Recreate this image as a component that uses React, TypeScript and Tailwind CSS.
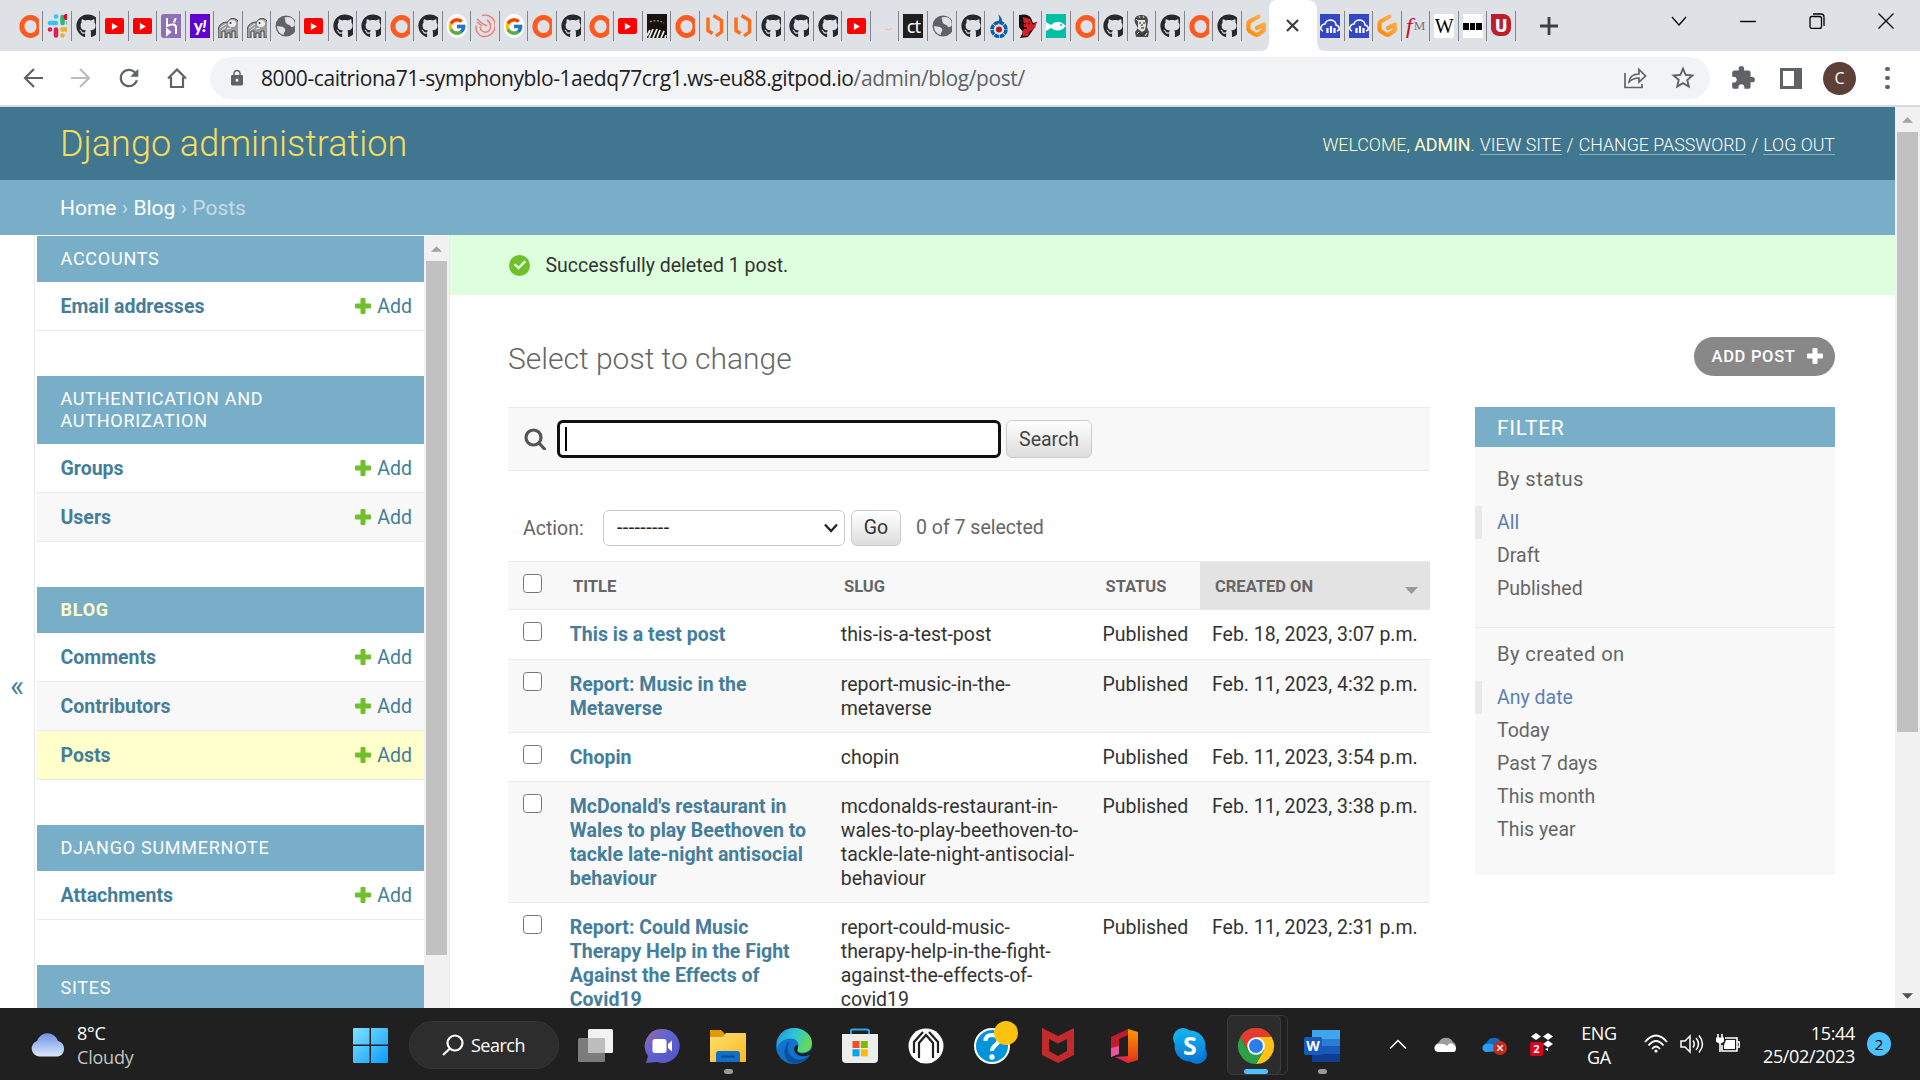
import React from "react";
import { FaGithub, FaCheck } from "react-icons/fa";
import { FcGoogle } from "react-icons/fc";
import { MdExtension, MdLock, MdStarBorder, MdRefresh } from "react-icons/md";

/* ---------- tab favicons ---------- */

const OrangeRing = () => (
  <svg viewBox="0 0 24 24" className="size-6">
    <ellipse cx="11.500" cy="12.500" rx="8.600" ry="9" fill="none" stroke="#ff5a1f" strokeWidth="5" />
  </svg>
);

const Slack = () => (
  <svg viewBox="0 0 24 24" className="size-6">
    <g strokeWidth="4.600" strokeLinecap="round">
      <path d="M9 2.500v0M9 9H3" stroke="#36c5f0" />
      <path d="M15.500 3v6M21.500 9v0" stroke="#2eb67d" />
      <path d="M15.500 15.500h6M15.500 21.500v0" stroke="#ecb22e" />
      <path d="M9 15.500v6M3 15.500v0" stroke="#e01e5a" />
    </g>
    <circle cx="19.500" cy="3" r="3" fill="#e8001c" />
  </svg>
);

const Github = () => <FaGithub className="size-6 text-[#24292f]" />;

const Youtube = () => (
  <div className="mt-1 ml-[0.5px] flex h-4 w-[19px] items-center justify-center rounded-[2px] bg-[#ff0000]">
    <svg viewBox="0 0 8 8" className="size-[7px]">
      <path d="M1 0l7 4-7 4z" fill="#fff" />
    </svg>
  </div>
);

const Heroku = () => (
  <div className="h-6 w-5 rounded-l-[3px] bg-[#8f70b5]">
    <svg viewBox="0 0 20 24" className="h-6 w-5">
      <path d="M6 4v8c4-2 9-2.500 9 1.500V20M14.500 4c0 2-1 3.500-2 4.500M6 15.500v5l3-2.500z" fill="none" stroke="#fff" strokeWidth="2" />
    </svg>
  </div>
);

const Yahoo = () => (
  <div className="flex h-6 w-5 items-center justify-center bg-[#6001d2] font-['Lato'] text-[17px] font-black tracking-tighter text-white">
    y<span className="italic">!</span>
  </div>
);

const Elephant = () => (
  <svg viewBox="0 0 24 24" className="size-6">
    <path d="M0 24V16c1-6 5-8 10-8 1-4 7-5 10-1 2 4 1 10 0 17h-3v-7h-3v7h-2v-5H9v5H7v-7H4v7z" fill="#9b9b9b" stroke="#444" strokeWidth="1" />
    <ellipse cx="14" cy="9.500" rx="4" ry="3.500" fill="#eee" />
    <path d="M10 8l4 3M2 14l6-4M3 17l5-4M9 15l4-1" stroke="#eee" />
    <circle cx="12.500" cy="9" r="1" fill="#333" />
  </svg>
);

const Globe = () => (
  <svg viewBox="0 0 24 24" className="size-6">
    <circle cx="11" cy="12" r="10.500" fill="#5f6368" />
    <path d="M2 12c3 1 7 0 8 3s-2 3-1 6c-4-1-7-4-7-9zM9 4c3-2 7-1 9 1 2 3 2 5 1.500 7-2 1-3 2-4 0s-4-1-5-4 1-2-1.500-4z" fill="#dee1e6" />
  </svg>
);

const Google = () => (
  <div className="flex h-6 w-5 items-center justify-center rounded-full bg-white">
    <FcGoogle className="h-[21px] w-5" />
  </div>
);

const Swirl = () => (
  <svg viewBox="0 0 24 24" className="size-6" fill="none" stroke="#ee7b75" strokeWidth="1.400">
    <path d="M7 1.500c9-2 14 5 13 11.500-1 7-7 10-12 9.500-5-1-8-6-6.500-11M12 6c4 2 5 9 1 11.500-4 2-8-1-8-5M2 5l6 5 4 2M2 8l5 4" />
  </svg>
);

const Piano = () => (
  <svg viewBox="0 0 20 24" className="h-6 w-5">
    <rect width="20" height="24" fill="#15120f" />
    <path d="M3 8q7-3 14 1" stroke="#a67a2c" strokeWidth="1.500" fill="none" strokeDasharray="2 1.500" />
    <path d="M0 22l3-6M2 24l4-9M6 24l4-9M10 24l3-8M14 24l3-7M18 24l1-3" stroke="#eee" strokeWidth="1.800" />
  </svg>
);

const Hexes = () => (
  <svg viewBox="0 0 22 24" className="h-6 w-[22px]" fill="none" stroke="#ff6c1a" strokeWidth="3.400">
    <path d="M4 3.500V16.500l4.500 3M9.500 1.500L17.500 6.500V18l-5.500 4" />
  </svg>
);

const PaleBird = () => (
  <svg viewBox="0 0 24 24" className="size-6">
    <path d="M1 12q5 0 7 3t5 1l7-5q0 7-8 7T1 12z" fill="#e9dfe4" />
    <path d="M10 15l4 1 3-2" stroke="#f0b5b5" fill="none" />
  </svg>
);

const Ct = () => (
  <div className="flex h-6 w-5 items-center justify-center bg-[#1f1f1f] font-['Noto_Sans'] text-[18px] leading-6 tracking-tighter text-white">ct</div>
);

const Commons = () => (
  <svg viewBox="0 0 20 24" className="h-6 w-5">
    <circle cx="10" cy="15.500" r="7" fill="none" stroke="#0a5fa5" strokeWidth="3.500" strokeDasharray="4.700 .8" />
    <circle cx="10" cy="15.500" r="3" fill="#b01c1c" />
    <path d="M9 0q6 5 3 9H8q4-4 1-9z" fill="#0a5fa5" />
  </svg>
);

const Devil = () => (
  <svg viewBox="0 0 20 24" className="h-6 w-5">
    <path d="M1 1q9-2 12 3l2 5 4-1-4 8-5 7-8 1 3-6-4-5z" fill="#1a1010" />
    <path d="M5 3l7 2 3 6 4-4-2 7-6 4-1 4-5 0-1-4 2-3z" fill="#d42027" />
    <path d="M5 9l3 1M10 9l2 1M5 14h4" stroke="#200" strokeWidth="1.300" />
  </svg>
);

const Fish = () => (
  <svg viewBox="0 0 20 24" className="h-6 w-5">
    <rect width="20" height="24" fill="#00bfa5" />
    <path d="M0 8l5 3q7-7 15 1-7 8-15 2l-5 3z" fill="#fff" />
    <circle cx="15" cy="11" r="1" fill="#00bfa5" />
  </svg>
);

const Portrait = () => (
  <svg viewBox="0 0 20 24" className="h-6 w-5">
    <path d="M3 9Q1 2 8 1q8-1 8 6l-1 6 2 5-1 5H4l-1-5 3-4z" fill="#4a4a4a" />
    <path d="M6 6h7l1 5-1 5-3 2-4-3z" fill="#e2e2e2" />
    <path d="M7 9h2M11 9h2M9 14h3M10 10v2M7 19l3 3 4-4" stroke="#222" fill="none" />
    <path d="M4 5l2 2M7 2l1 2M11 2l1 2M5 20l2-2M13 22l2-3" stroke="#ddd" />
  </svg>
);

const Gitpod = () => (
  <svg viewBox="0 0 24 24" className="size-6">
    <defs>
      <linearGradient id="gp" x1="1" x2="0" y1="0" y2="1">
        <stop stopColor="#ffb45b" />
        <stop offset="1" stopColor="#ff8a00" />
      </linearGradient>
    </defs>
    <path d="M12.500 2.500L3.500 7.500q-1 .6-1 2v5.500q0 1.500 1 2l5.500 3.500q1.500.8 3 0l5-3.500q1-.6 1-2v-4.500L11 14" fill="none" stroke="url(#gp)" strokeWidth="4.200" strokeLinecap="round" strokeLinejoin="round" />
  </svg>
);

const Cloudinary = () => (
  <svg viewBox="0 0 20 24" className="h-6 w-5">
    <rect width="20" height="24" fill="#3448c5" />
    <path d="M3 17q-3-1-2-4 1-3 4-3 1-4 6-4 5 1 5 5 4 1 3 5l-2 1" fill="none" stroke="#fff" strokeWidth="1.500" />
    <path d="M7.500 19v-5M11 19v-7M14.500 19v-5" stroke="#fff" strokeWidth="2.200" />
  </svg>
);

const Fm = () => (
  <div className="flex h-6 w-5 items-center font-['Liberation_Serif'] leading-6">
    <span className="w-[8px] text-[24px] text-[#c8102e] italic">f</span>
    <span className="text-[13px] text-[#777]">M</span>
  </div>
);

const Wiki = () => (
  <div className="flex h-6 w-5 items-center justify-center rounded-[2px] bg-white font-['Liberation_Serif'] text-[20px] text-black">W</div>
);

const Blocks = () => (
  <div className="flex h-6 w-5 items-center justify-center gap-px bg-white">
    <i className="h-[7px] w-[5.5px] bg-black" />
    <i className="h-[7px] w-[5.5px] bg-black" />
    <i className="h-[7px] w-[5.5px] bg-black" />
  </div>
);

const RedU = () => (
  <div className="flex h-[22px] w-5 items-center justify-center rounded-[8px] rounded-tl-none bg-[#bd1e2d] font-['Roboto'] text-[18px] font-black text-white">U</div>
);

const leftTabs: React.FC[] = [
  OrangeRing, Slack, Github, Youtube, Youtube, Heroku, Yahoo, Elephant, Elephant, Globe, Youtube,
  Github, Github, OrangeRing, Github, Google, Swirl, Google, OrangeRing, Github, OrangeRing, Youtube,
  Piano, OrangeRing, Hexes, Hexes, Github, Github, Github, Youtube, PaleBird, Ct, Globe, Github,
  Commons, Devil, Fish, OrangeRing, Github, Portrait, Github, OrangeRing, Github, Gitpod,
];
const rightTabs: React.FC[] = [Cloudinary, Cloudinary, Gitpod, Fm, Wiki, Blocks, RedU];

function Tab({ Icon, line }: { Icon: React.FC; line: boolean }) {
  return (
    <div className="flex w-[28.55px] shrink-0 items-center justify-between pl-[4px]">
      <div className="h-6 w-5 overflow-hidden">
        <Icon />
      </div>
      {line && <div className="h-[30px] w-px bg-[#80858b]" />}
    </div>
  );
}

function TabStrip() {
  return (
    <div className="flex h-[51px] bg-[#dee1e6]">
      <div className="flex w-[1269px] items-center rounded-br-[10px] bg-[#dee1e6] pt-px pl-[14.500px]">
        {leftTabs.map((I, i) => (
          <Tab key={i} Icon={I} line={i < leftTabs.length - 1} />
        ))}
      </div>
      <div className="-ml-2 flex w-[64px] bg-white [clip-path:path('M0_51Q8_51_8_41V10Q8_0_16_0H46Q56_0_56_10V41Q56_51_64_51Z')]">
        <svg viewBox="0 0 14 14" className="mt-[19px] ml-[25px] size-[13px]" stroke="#3c4043" strokeWidth="2.400">
          <path d="M1 1l12 12M13 1L1 13" />
        </svg>
      </div>
      <div className="-ml-[9px] flex items-center pt-px">
        {rightTabs.map((I, i) => (
          <Tab key={i} Icon={I} line />
        ))}
      </div>
      <svg viewBox="0 0 18 18" className="mt-[17px] ml-[24px] size-[18px]" stroke="#3c4043" strokeWidth="2.800">
        <path d="M9 0v18M0 9h18" />
      </svg>
      <div className="mt-[13px] mr-[26px] ml-auto flex h-4 items-center gap-[53px] text-black">
        <svg viewBox="0 0 16 16" className="size-4" fill="none" stroke="currentColor" strokeWidth="1.200">
          <path d="M1 4l7 8 7-8" />
        </svg>
        <svg viewBox="0 0 16 16" className="size-4" stroke="currentColor" strokeWidth="1.400">
          <path d="M0 8.500h16" />
        </svg>
        <svg viewBox="0 0 16 16" className="size-4" fill="none" stroke="currentColor" strokeWidth="1.300">
          <rect x="1" y="3.500" width="11.500" height="12" rx="2" />
          <path d="M4 1h8q3 0 3 3v9" />
        </svg>
        <svg viewBox="0 0 16 16" className="size-4" stroke="currentColor" strokeWidth="1.300">
          <path d="M.5.5l15 15M15.500.5l-15 15" />
        </svg>
      </div>
    </div>
  );
}

function Toolbar() {
  return (
    <div className="flex h-[56px] items-center border-b-2 border-[#d9dadc] bg-white font-['Open_Sans'] text-[#5f6368]">
      <div className="flex w-[210px] items-center gap-[28px] pl-[23px]">
        <svg viewBox="0 0 20 20" className="size-5" fill="none" stroke="currentColor" strokeWidth="2.200">
          <path d="M20 10H2M11 1l-9 9 9 9" />
        </svg>
        <svg viewBox="0 0 20 20" className="size-5" fill="none" stroke="#b9bbbe" strokeWidth="2.200">
          <path d="M0 10h18M9 1l9 9-9 9" />
        </svg>
        <MdRefresh className="-mx-[4px] size-7" />
        <svg viewBox="0 0 20 20" className="size-5" fill="none" stroke="currentColor" strokeWidth="2.200">
          <path d="M1 10.500L10 1.500l9 9M4 9v10h12V9" />
        </svg>
      </div>
      <div className="flex h-[42px] w-[1500px] items-center rounded-full bg-[#f1f3f4] pl-[18px]">
        <MdLock className="size-[18px]" />
        <div className="ml-[15px] w-[770px] pt-[2px] text-[21px] tracking-[-0.41px] whitespace-nowrap text-[#202124]">
          8000-caitriona71-symphonyblo-1aedq77crg1.ws-eu88.gitpod.io
          <span className="text-[#5f6368]">/admin/blog/post/</span>
        </div>
        <svg viewBox="0 0 24 22" className="mr-[22px] ml-auto h-[22px] w-6" fill="none" stroke="currentColor" strokeWidth="1.700">
          <path d="M2 6v14.500h17V17" />
          <path d="M6 15q1-8 10-8V2.500l6.500 6.500-6.500 6v-4q-6 0-10 4z" />
        </svg>
        <MdStarBorder className="mr-[13px] size-[28px]" />
      </div>
      <div className="flex grow items-center pl-[20px]">
        <MdExtension className="size-[26px]" />
        <div className="ml-[24px] h-[21px] w-[22px] border-[3px] border-r-[8px] border-[#5f6368]" />
        <div className="ml-[21px] flex size-[33px] items-center justify-center rounded-full bg-[#5d4037] text-[16px] text-white">C</div>
        <div className="ml-[29px] flex flex-col gap-[4.500px]">
          <i className="size-[4.5px] rounded-full bg-[#5f6368]" />
          <i className="size-[4.5px] rounded-full bg-[#5f6368]" />
          <i className="size-[4.5px] rounded-full bg-[#5f6368]" />
        </div>
      </div>
    </div>
  );
}

/* ---------- Django admin ---------- */

const Plus = () => (
  <svg viewBox="0 0 16 16" className="size-4 shrink-0" fill="currentColor">
    <path d="M6.500 0h3q1 0 1 1v4.500H15q1 0 1 1v3q0 1-1 1h-4.500V15q0 1-1 1h-3q-1 0-1-1v-4.500H1q-1 0-1-1v-3q0-1 1-1h4.500V1q0-1 1-1z" />
  </svg>
);

type NavModule = { name: string; items: string[]; tall?: boolean; current?: boolean };

const modules: NavModule[] = [
  { name: "ACCOUNTS", items: ["Email addresses"] },
  { name: "AUTHENTICATION AND AUTHORIZATION", items: ["Groups", "Users"], tall: true },
  { name: "BLOG", items: ["Comments", "Contributors", "Posts"], current: true },
  { name: "DJANGO SUMMERNOTE", items: ["Attachments"] },
  { name: "SITES", items: [] },
];

function Module({ m }: { m: NavModule }) {
  return (
    <div className="mb-[45px]">
      <div
        className={`bg-[#79aec8] py-3 pl-[23.5px] text-[18px] leading-[22px] tracking-[0.75px] ${m.tall ? "h-[68px] pr-24" : "h-[46px]"} ${
          m.current ? "font-bold text-[#ffffcc]" : "text-white"
        }`}
      >
        {m.name}
      </div>
      {m.items.map((item, i) => (
        <div
          key={item}
          className={`flex h-[49px] items-center border-b border-[#eaeaea] pr-3 pl-[23.5px] text-[19.500px] text-[#447e9b] ${
            item === "Posts" ? "bg-[#ffffcc]" : i % 2 ? "bg-[#f8f8f8]" : "bg-white"
          }`}
        >
          <span className="pt-[2px] font-bold">{item}</span>
          <div className="mr-[6px] ml-auto text-[#70bf2b]">
            <Plus />
          </div>
          <span className="pt-[2px]">Add</span>
        </div>
      ))}
    </div>
  );
}

function ScrollArrow({ up, dark }: { up?: boolean; dark?: boolean }) {
  return (
    <svg viewBox="0 0 12 6" className={`h-[6px] w-[11px] ${dark ? "text-[#505050]" : "text-[#a3a3a3]"}`}>
      <path d={up ? "M6 0l6 6H0z" : "M0 0h12L6 6z"} fill="currentColor" />
    </svg>
  );
}

function Sidebar() {
  return (
    <div className="flex h-full w-[450px] shrink-0 border-r border-[#eaeaea] bg-white">
      <div className="flex w-[35px] shrink-0 items-center border-r border-[#eaeaea] pl-[10px] text-[30px] text-[#447e9b]">
        <span className="mt-[128px]">«</span>
      </div>
      <div className="ml-[2px] h-full w-[387px] shrink-0 overflow-hidden pt-px">
        {modules.map((m) => (
          <Module key={m.name} m={m} />
        ))}
      </div>
      <div className="mt-px flex w-[25px] flex-col items-center bg-[#f1f1f1]">
        <div className="flex h-[25px] shrink-0 items-center pt-px">
          <ScrollArrow up />
        </div>
        <div className="h-[694px] w-[21px] bg-[#c1c1c1]" />
      </div>
    </div>
  );
}

type Row = { title: string[]; slug: string[]; date: string; h: string };

const rows: Row[] = [
  { title: ["This is a test post"], slug: ["this-is-a-test-post"], date: "Feb. 18, 2023, 3:07 p.m.", h: "h-[50px] bg-white" },
  { title: ["Report: Music in the", "Metaverse"], slug: ["report-music-in-the-", "metaverse"], date: "Feb. 11, 2023, 4:32 p.m.", h: "h-[73px] bg-[#f8f8f8]" },
  { title: ["Chopin"], slug: ["chopin"], date: "Feb. 11, 2023, 3:54 p.m.", h: "h-[49px] bg-white" },
  {
    title: ["McDonald's restaurant in", "Wales to play Beethoven to", "tackle late-night antisocial", "behaviour"],
    slug: ["mcdonalds-restaurant-in-", "wales-to-play-beethoven-to-", "tackle-late-night-antisocial-", "behaviour"],
    date: "Feb. 11, 2023, 3:38 p.m.",
    h: "h-[121px] bg-[#f8f8f8]",
  },
  {
    title: ["Report: Could Music", "Therapy Help in the Fight", "Against the Effects of", "Covid19"],
    slug: ["report-could-music-", "therapy-help-in-the-fight-", "against-the-effects-of-", "covid19"],
    date: "Feb. 11, 2023, 2:31 p.m.",
    h: "h-[121px] bg-white",
  },
];

const Check = () => <div className="ml-[15px] size-[19px] rounded-[3.500px] border-[1.500px] border-[#767676] bg-white" />;

const Lines = ({ t }: { t: string[] }) => (
  <div className="pl-[11.75px] whitespace-nowrap">
    {t.map((l) => (
      <div key={l}>{l}</div>
    ))}
  </div>
);

function Results() {
  return (
    <div>
      <div className="grid h-[49px] grid-cols-[50px_271px_262px_109px_1fr] border-y border-[#eaeaea] bg-[#f8f8f8] text-[16.500px] leading-[50px] font-bold text-[#666]">
        <div className="pt-[12px]">
          <Check />
        </div>
        <div className="pl-[15px]">TITLE</div>
        <div className="pl-[15px]">SLUG</div>
        <div className="pl-[14.5px]">STATUS</div>
        <div className="flex h-[47px] items-center justify-between bg-[#e3e3e3] pr-3 pl-[15px]">
          <span className="pt-[2px]">CREATED ON</span>
          <svg viewBox="0 0 13 7" className="mt-[9px] h-[7px] w-[13px]">
            <path d="M0 0h13L6.500 7z" fill="#999" />
          </svg>
        </div>
      </div>
      {rows.map((r) => (
        <div key={r.date} className={`grid grid-cols-[50px_271px_262px_109px_1fr] border-b border-[#eaeaea] pt-[13px] text-[19.500px] leading-[24px] text-[#333] ${r.h}`}>
          <div className="-mt-px">
            <Check />
          </div>
          <div className="font-bold text-[#447e9b]">
            <Lines t={r.title} />
          </div>
          <Lines t={r.slug} />
          <div className="pl-[11.5px]">Published</div>
          <div className="pl-3 whitespace-nowrap">{r.date}</div>
        </div>
      ))}
    </div>
  );
}

function FilterGroup({ title, items }: { title: string; items: string[] }) {
  return (
    <div className="pt-[16px]">
      <div className="pl-[22px] text-[20.2px] leading-[32px] tracking-[0.4px]">{title}</div>
      <div className="pt-[11px] text-[19.500px] leading-[33px]">
        {items.map((it, i) => (
          <div key={it} className={i === 0 ? "border-l-[7px] border-[#eaeaea] pl-[15px] text-[#5b80b2]" : "pl-[22px]"}>
            {it}
          </div>
        ))}
      </div>
    </div>
  );
}

function Main() {
  return (
    <div className="grow overflow-hidden bg-white">
      <div className="flex h-[60px] items-center bg-[#ddffdd] pl-[59px] text-[19.500px] text-[#333]">
        <span className="mr-[15.5px] flex size-[21px] items-center justify-center rounded-full bg-[#70bf2b]">
          <FaCheck className="size-[12px] text-[#ddffdd]" />
        </span>
        <span className="pt-[2px]">Successfully deleted 1 post.</span>
      </div>
      <div className="flex items-start justify-between pr-[60px] pl-[58px]">
        <div className="pt-[46px] text-[30px] leading-[36px] font-light text-[#666]">Select post to change</div>
        <div className="mt-[42px] flex h-[39px] w-[141px] items-center rounded-full bg-[#888] pl-[17.5px] text-[16.500px] font-medium tracking-[0.7px] whitespace-nowrap text-white">
          <span className="pt-px">ADD POST</span>
          <div className="mt-[-2px] ml-[11px]">
            <Plus />
          </div>
        </div>
      </div>
      <div className="mt-[30px] flex items-start justify-between pr-[60px] pl-[58px]">
        <div className="w-[922px]">
          <div className="flex h-[64px] items-center border-y border-[#eaeaea] bg-[#f8f8f8] pl-[16px]">
            <svg viewBox="0 0 22 22" className="size-[22px]" fill="none" stroke="#555" strokeWidth="3.200">
              <circle cx="9.500" cy="9.500" r="7.500" />
              <path d="M15 15l5.500 6" strokeLinecap="round" />
            </svg>
            <div className="ml-[11px] flex h-[38px] w-[444px] items-center rounded-[6px] border-[3px] border-[#101010] bg-white pl-[5px]">
              <div className="h-[24px] w-[2px] bg-black" />
            </div>
            <div className="ml-[5px] flex h-[38px] w-[86px] items-center justify-center rounded-[6px] border border-[#ccc] bg-linear-to-b from-white to-[#ddd] pt-px text-[19.500px] text-[#444]">
              Search
            </div>
          </div>
          <div className="flex h-[90px] items-end pb-[15px] pl-[15px] text-[19.500px] text-[#666]">
            <div className="flex h-[36px] items-center">
              <span className="w-[80px] pt-[2px]">Action:</span>
              <div className="flex h-9 w-[242px] items-center justify-between rounded-[6px] border border-[#ccc] bg-white pr-[6px] pl-[13px] text-[#222]">
                <span className="tracking-[0.45px]">---------</span>
                <svg viewBox="0 0 14 10" className="h-[10px] w-[14px]" fill="none" stroke="#222" strokeWidth="2.300">
                  <path d="M1 1.500l6 6.500 6-6.500" />
                </svg>
              </div>
              <div className="ml-[6px] flex h-9 w-[50px] items-center justify-center rounded-[6px] border border-[#ccc] bg-linear-to-b from-white to-[#ddd] text-[#333]">Go</div>
              <span className="ml-[15px]">0 of 7 selected</span>
            </div>
          </div>
          <Results />
        </div>
        <div className="h-[468px] w-[360px] bg-[#f8f8f8] text-[#666]">
          <div className="h-10 bg-[#79aec8] pl-[22px] text-[21px] leading-[43px] tracking-[0.7px] text-white">FILTER</div>
          <FilterGroup title="By status" items={["All", "Draft", "Published"]} />
          <div className="mt-[22px] -mb-px border-t border-[#eaeaea]" />
          <div className="-mt-[6px]">
            <FilterGroup title="By created on" items={["Any date", "Today", "Past 7 days", "This month", "This year"]} />
          </div>
        </div>
      </div>
    </div>
  );
}

function Admin() {
  return (
    <div className="flex h-[901px] font-['Roboto']">
      <div className="flex w-[1895px] flex-col">
        <div className="flex h-[73px] shrink-0 items-center justify-between bg-[#417690] pr-[60px] pl-[60px]">
          <div className="text-[36px] font-light text-[#f5dd5d]">Django administration</div>
          <div className="flex gap-[5px] pt-[2px] text-[17.8px] leading-[19px] font-light whitespace-nowrap text-[#ffffcc]">
            <span>
              WELCOME, <b>ADMIN</b>.
            </span>
            <span className="border-b border-white/40 text-white">VIEW SITE</span>/
            <span className="border-b border-white/40 text-white">CHANGE PASSWORD</span>/
            <span className="border-b border-white/40 text-white">LOG OUT</span>
          </div>
        </div>
        <div className="flex h-[55px] shrink-0 items-center gap-[5.3px] bg-[#79aec8] pt-[2px] pl-[60px] text-[21px] text-[#c4dce8]">
          <span className="text-white">Home</span>›<span className="text-white">Blog</span>›<span>Posts</span>
        </div>
        <div className="flex h-[773px] overflow-hidden">
          <Sidebar />
          <Main />
        </div>
      </div>
      <div className="flex w-[25px] flex-col items-center bg-[#f1f1f1]">
        <div className="flex h-[25px] items-center pt-px">
          <ScrollArrow up />
        </div>
        <div className="h-[600px] w-[21px] bg-[#c1c1c1]" />
        <div className="mt-auto mb-[9px]">
          <ScrollArrow dark />
        </div>
      </div>
    </div>
  );
}

/* ---------- Windows taskbar ---------- */

function Defs() {
  return (
    <defs>
      <linearGradient id="win" x1="0" y1="0" x2="1" y2="1"><stop stopColor="#7fe3ff" /><stop offset="1" stopColor="#0a9bff" /></linearGradient>
      <linearGradient id="chat" x1="0" y1="0" x2="1" y2="1"><stop stopColor="#a06a9c" /><stop offset=".4" stopColor="#6264d0" /><stop offset="1" stopColor="#4f52c0" /></linearGradient>
      <linearGradient id="fold" x1="0" y1="0" x2="1" y2="1"><stop stopColor="#ffe072" /><stop offset="1" stopColor="#f9b91f" /></linearGradient>
      <linearGradient id="edgeA" x1="0" y1="0" x2="1" y2=".4"><stop stopColor="#1a8fd8" /><stop offset=".5" stopColor="#2cc5d8" /><stop offset="1" stopColor="#62dc58" /></linearGradient>
      <linearGradient id="cld" x1="0" y1="0" x2="0" y2="1"><stop stopColor="#6e93e8" /><stop offset="1" stopColor="#dbe8fb" /></linearGradient>
      <linearGradient id="sky" x1="0" y1="0" x2="0" y2="1"><stop stopColor="#12b3f0" /><stop offset="1" stopColor="#0a76d4" /></linearGradient>
      <linearGradient id="off" x1="0" y1="0" x2="0" y2="1"><stop stopColor="#ff9a00" /><stop offset="1" stopColor="#e0301a" /></linearGradient>
    </defs>
  );
}

const apps: { el: React.ReactNode; dot?: boolean; active?: boolean }[] = [
  {
    el: (
      <>
        <rect x="10" y="1" width="25" height="24" rx="1.500" fill="#f2f2f2" />
        <rect x="0" y="10" width="27" height="24" rx="1.500" fill="#7c7c7c" />
        <rect x="10" y="10" width="17" height="15" fill="#bdbdbd" />
      </>
    ),
  },
  {
    el: (
      <>
        <path d="M18 1a17 17 0 1 1-5 33L2 35l2-7A17 17 0 0 1 18 1z" fill="url(#chat)" />
        <rect x="8.500" y="11" width="14" height="14" rx="2.500" fill="#fff" />
        <path d="M24 16l4-3.500v11L24 20z" fill="#fff" />
      </>
    ),
  },
  {
    dot: true,
    el: (
      <>
        <path d="M0 2h11l4 4v8H0z" fill="#e09a0a" />
        <path d="M0 9h13l3-4h19q1 0 1 1v27q0 1-1 1H1q-1 0-1-1z" fill="url(#fold)" />
        <path d="M6 34V26q0-3 3-3h18q3 0 3 3v8z" fill="#0f70c8" />
        <path d="M11 28.500h14" stroke="#0a4a8c" strokeWidth="2" />
      </>
    ),
  },
  {
    el: (
      <>
        <circle cx="18" cy="18" r="18" fill="#1273cc" />
        <path d="M1 13C4 3 12 0 18 0c10 0 18 7 18 15 0 7-5 9.500-10 9.500-4 0-6-2-4.500-4 3-5-1-10-7-10S3 14 1 20z" fill="url(#edgeA)" />
        <path d="M14 13c-4 5-3 15 6 18 6 1.500 11-1 14-4-5 8-15 11-21 7C6 29 8 16 14 13z" fill="#0c4f9e" />
        <path d="M22 20.500c-2 3 1 5 5 5 4-.2 7-2 9-5l1 3-3 3c-7 4-15 1-16-5 0-3 2-5 4-4z" fill="#202020" />
      </>
    ),
  },
  {
    el: (
      <>
        <path d="M9 8V3q0-1.500 1.500-1.500h14Q27 1.500 27 3v5" fill="none" stroke="#28a8ea" strokeWidth="2" />
        <path d="M0 6h36v25q0 4-4 4H4q-4 0-4-4z" fill="#ececec" />
        <path d="M10.500 13h7v7h-7z" fill="#f25022" /><path d="M18.800 13h7v7h-7z" fill="#7fba00" />
        <path d="M10.500 21.300h7v7h-7z" fill="#00a4ef" /><path d="M18.800 21.300h7v7h-7z" fill="#ffb900" />
      </>
    ),
  },
  {
    el: (
      <>
        <circle cx="18" cy="18" r="17.500" fill="#fff" />
        <path d="M6 25V14l9-10M30 25V14L21 4M11 30V15l7-8 7 8v15" fill="none" stroke="#202020" strokeWidth="2.200" />
        <path d="M12 35v-5l6-4 6 4v5z" fill="#fff" />
      </>
    ),
  },
  {
    el: (
      <>
        <circle cx="18" cy="18" r="17" fill="#0095da" stroke="#fff" strokeWidth="2" />
        <path d="M11.500 13q0-6 6.500-6t6.500 5.500c0 5-6.500 4.500-6.500 10.500" fill="none" stroke="#fff" strokeWidth="4" />
        <circle cx="18" cy="29" r="2.700" fill="#fff" />
        <circle cx="32" cy="5" r="12" fill="#ffc20e" />
      </>
    ),
  },
  { el: <path d="M2 0l16 8 16-8v27L18 35 2 27zM9 11v12l9 5 9-5V11l-9 4.500z" fillRule="evenodd" fill="#c12b2b" /> },
  {
    el: (
      <>
        <path d="M22 1l10 3v28l-10 3z" fill="url(#off)" />
        <path d="M5 9L22 1v6l-9 4v14l-8 4z" fill="#c01c2c" />
        <path d="M5 20l8-2v8l-8 3z" fill="#e8559a" />
        <path d="M9 29l13-1v7z" fill="#e8284a" />
      </>
    ),
  },
  {
    el: (
      <>
        <circle cx="11" cy="10" r="10" fill="#12aeea" /><circle cx="25" cy="26" r="10" fill="#0a76d4" />
        <circle cx="18" cy="18" r="15.500" fill="url(#sky)" />
        <text x="18" y="27" textAnchor="middle" fontFamily="Open Sans" fontWeight="700" fontSize="25" fill="#fff">S</text>
      </>
    ),
  },
  {
    active: true,
    el: (
      <>
        <path d="M18 18L2.400 9A18 18 0 0 1 33.600 9z" fill="#e33b2e" />
        <path d="M18 9h15.600A18 18 0 0 1 18 36l7.800-13.500z" fill="#fbc116" />
        <path d="M10.200 22.500L2.400 9A18 18 0 0 0 18 36l7.800-13.500z" fill="#2c9f47" />
        <path d="M2.400 9A18 18 0 0 1 33.600 9H18l-7.800 4.500-1 7z" fill="#e33b2e" />
        <circle cx="18" cy="18" r="8.800" fill="#fff" />
        <circle cx="18" cy="18" r="7" fill="#2b7de9" />
      </>
    ),
  },
  {
    dot: true,
    el: (
      <>
        <rect x="8" y="2" width="28" height="32" rx="2" fill="#2b7cd3" />
        <path d="M8 2h28v9H8z" fill="#41a5ee" /><path d="M8 18h28v8H8z" fill="#185abd" /><path d="M8 26h28v8H8z" fill="#103f91" />
        <rect x="0" y="9" width="18" height="18" rx="1.500" fill="#185abd" />
        <text x="9" y="23" textAnchor="middle" fontFamily="Open Sans" fontWeight="700" fontSize="14" fill="#fff">W</text>
      </>
    ),
  },
];

function Taskbar() {
  return (
    <div className="flex h-[72px] items-center bg-[#202020] font-['Open_Sans'] text-[18px] text-white">
      <div className="flex w-[353px] shrink-0 items-center pl-[30px]">
        <svg viewBox="0 0 36 24" className="mt-0.5 h-6 w-9">
          <Defs />
          <path d="M9 23.500A8 8 0 0 1 7 8a11 11 0 0 1 21 0 8 8 0 0 1 0 15.500z" fill="url(#cld)" />
        </svg>
        <div className="mt-[2px] ml-[11px] leading-[24px] tracking-[-0.2px]">
          <div>8°C</div>
          <div className="text-[#c4c4c4]">Cloudy</div>
        </div>
      </div>
      <svg viewBox="0 0 36 36" className="mt-[2px] size-[35px] shrink-0" fill="url(#win)">
        <path d="M0 1q0-1 1-1h16v17H0zM18.500 0H35q1 0 1 1v16H18.500zM0 18.500h17V36H1q-1 0-1-1zM18.500 18.500H36V35q0 1-1 1H18.500z" />
      </svg>
      <div className="mt-[2px] ml-[21px] flex h-12 w-[150px] shrink-0 items-center rounded-full border border-[#363636] bg-[#2d2d2d] pl-[32px]">
        <svg viewBox="0 0 22 22" className="size-[22px]" fill="none" stroke="#fff" strokeWidth="2.200">
          <circle cx="13" cy="9" r="7.500" />
          <path d="M8 14.500L1 21" />
        </svg>
        <span className="ml-[7px] tracking-[-0.5px]">Search</span>
      </div>
      <div className="ml-[4px] flex shrink-0">
        {apps.map((a, i) => (
          <div key={i} className="relative flex h-[72px] w-[66px] items-center justify-center">
            {a.active && (
              <>
                <div className="absolute top-[7px] left-[8px] h-[60px] w-[57px] rounded-[6px] border border-[#383838]" />
                <div className="absolute top-[7px] left-[4px] h-[60px] w-[54px] rounded-[6px] border border-[#3c3c3c] bg-[#2c2c2c]" />
              </>
            )}
            <svg viewBox="0 0 36 36" className="relative mt-[3px] size-9 overflow-visible">
              {a.el}
            </svg>
            {a.dot && <div className="absolute bottom-[6px] h-[5px] w-[9px] rounded-full bg-[#9a9a9a]" />}
            {a.active && <div className="absolute bottom-[6px] h-[5px] w-6 rounded-full bg-[#4cc2ff]" />}
          </div>
        ))}
      </div>
      <div className="ml-auto flex items-center">
        <svg viewBox="0 0 18 10" className="h-[10px] w-[18px]" fill="none" stroke="#fff" strokeWidth="1.500">
          <path d="M1 9.500l8-8 8 8" />
        </svg>
        <svg viewBox="0 0 24 16" className="ml-[27px] h-4 w-6">
          <path d="M5 15A5 5 0 0 1 5 6a8 8 0 0 1 14 0 5 5 0 0 1 0 9z" fill="#9d9d9d" />
          <path d="M4 16a4 4 0 0 1 1-8q5-1 8 2a4 4 0 0 1 7-1 4 4 0 0 1 0 7z" fill="#fff" />
        </svg>
        <div className="relative ml-6">
          <svg viewBox="0 0 24 16" className="h-4 w-6">
            <path d="M5 15A5 5 0 0 1 5 6a8 8 0 0 1 14 0 5 5 0 0 1 0 9z" fill="#0f6cbd" />
            <path d="M4 16a4 4 0 0 1 1-8q5-1 8 2l7 5z" fill="#2a9df4" />
          </svg>
          <div className="absolute top-[5px] left-[11px] flex size-[14px] items-center justify-center rounded-full bg-[#c42b1c]">
            <svg viewBox="0 0 8 8" className="size-[6px]" stroke="#fff" strokeWidth="1.800">
              <path d="M0 0l8 8M8 0L0 8" />
            </svg>
          </div>
        </div>
        <div className="relative ml-6 h-[24px] w-6">
          <svg viewBox="0 0 24 22" className="h-[22px] w-6" fill="#fff">
            <path d="M6 1l5 3.500L6 8 1 4.500zM18 1l5 3.500L18 8l-5-3.500zM18 8.500l5 3.500-5 3.500-5-3.500zM15 17l3-1v3z" />
          </svg>
          <div className="absolute top-[10px] left-0 flex h-[14px] w-[13px] items-center justify-center rounded-[2px] bg-[#d9001b] text-[11px] font-bold">2</div>
        </div>
        <div className="mt-[2px] ml-[27px] w-[36px] text-center leading-[24px] tracking-[-0.3px]">
          <div>ENG</div>
          <div>GA</div>
        </div>
        <svg viewBox="0 0 24 20" className="ml-[27px] h-5 w-6" fill="none" stroke="#fff" strokeWidth="1.800">
          <path d="M1 8q11-13 22 0M4.500 11.500q7.500-9 15 0M8 15q4-5 8 0" />
          <circle cx="12" cy="17" r="1.600" fill="#fff" stroke="none" />
        </svg>
        <svg viewBox="0 0 24 20" className="ml-3 h-5 w-6" fill="none" stroke="#fff" strokeWidth="1.500">
          <path d="M1 7h4l5-5v16l-5-5H1zM13 6.500q2.500 3.500 0 7M16 4q5 6 0 12M19 1.500q7 8.500 0 17" />
        </svg>
        <svg viewBox="0 0 24 20" className="ml-3 h-5 w-6" fill="none" stroke="#fff" strokeWidth="1.600">
          <path d="M9 4h12v13H6v-6" />
          <path d="M10 6h9v9H8v-4z" fill="#fff" stroke="none" />
          <path d="M21 8h2.500v5H21M2 0v4M6 0v4M4 9v9" />
          <path d="M0 3.500h8v4q-4 4-8 0z" fill="#fff" stroke="none" />
        </svg>
        <div className="mt-px ml-[21px] w-[94px] text-right leading-[23px] tracking-[-0.35px] whitespace-nowrap">
          <div>15:44</div>
          <div>25/02/2023</div>
        </div>
        <div className="mr-[29px] ml-[12px] flex size-6 items-center justify-center rounded-full bg-[#4cc2ff] text-[15px] text-black">2</div>
      </div>
    </div>
  );
}

export default function App() {
  return (
    <div className="flex h-[1080px] w-[1920px] flex-col overflow-hidden bg-white">
      <TabStrip />
      <Toolbar />
      <Admin />
      <Taskbar />
    </div>
  );
}
